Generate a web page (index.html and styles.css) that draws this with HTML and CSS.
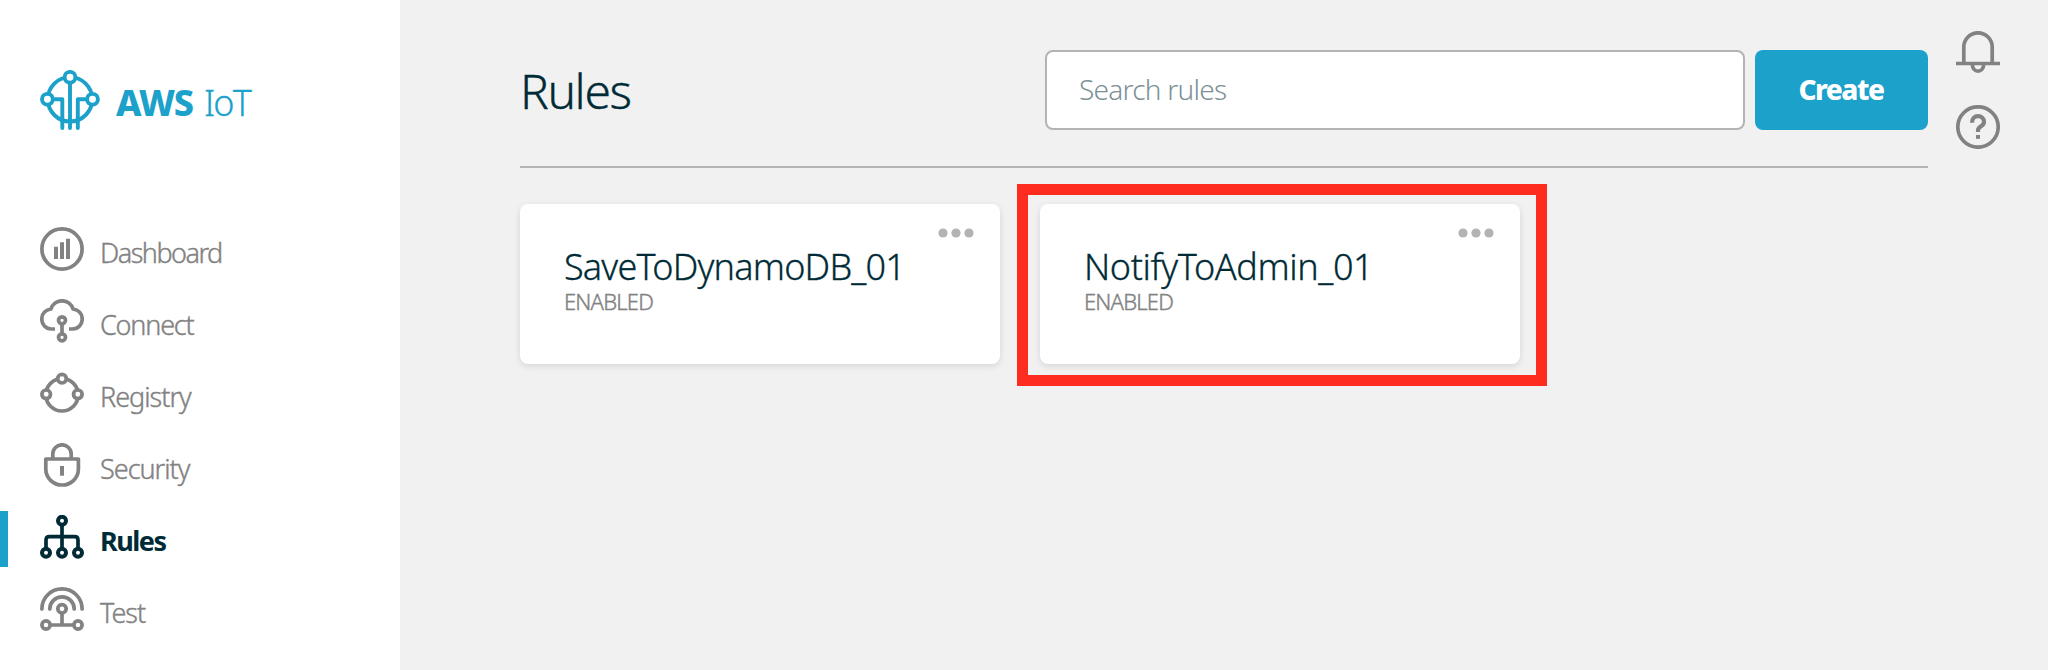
FILE: index.html
```html
<!DOCTYPE html>
<html lang="en">
<head>
<meta charset="utf-8">
<title>AWS IoT - Rules</title>
<link rel="stylesheet" href="styles.css">
</head>
<body>
<div class="app">
  <aside class="sidebar">
    <a class="logo">
      <svg class="logo-mark" viewBox="0 0 60 60">
        <circle cx="30" cy="29.3" r="22.2"/>
        <path d="M30 12V58M15 29.3H22.3V58M45 29.3H37.8V58"/>
        <circle class="node" cx="30" cy="7.3" r="5.4"/>
        <circle class="node" cx="7.4" cy="29.3" r="5.4"/>
        <circle class="node" cx="52.5" cy="29.3" r="5.4"/>
      </svg>
      <span class="logo-text"><b class="logo-aws">AWS</b><span class="logo-iot">IoT</span></span>
    </a>
    <nav class="nav">
      <a class="nav-item dashboard">
        <svg class="icon" viewBox="0 0 44 44"><circle cx="22" cy="22" r="20.1"/><path class="solid" d="M14 19.7h4V32h-4zM20 15.3h4V32h-4zM26 11.7h4V32h-4z"/></svg>
        <span class="label">Dashboard</span>
      </a>
      <a class="nav-item connect">
        <svg class="icon" viewBox="0 0 44 44"><path d="M15 30H11.5C5.5 30 1.8 25.5 1.8 20C1.8 14 6 10.8 11 10C12.5 5 17 1.8 22 1.8S31.5 5 33 10C38 10.8 42.2 14 42.2 20C42.2 25.5 38.5 30 32.5 30H29M22 25V35"/><circle class="node" cx="22" cy="21.3" r="3.5"/><circle class="node" cx="22" cy="38.3" r="3.5"/></svg>
        <span class="label">Connect</span>
      </a>
      <a class="nav-item registry">
        <svg class="icon" viewBox="0 0 44 44"><circle cx="22" cy="23.8" r="16.2"/><circle class="node" cx="22" cy="7.7" r="4.3"/><circle class="node" cx="6.2" cy="23.3" r="4.3"/><circle class="node" cx="37.8" cy="23.3" r="4.3"/></svg>
        <span class="label">Registry</span>
      </a>
      <a class="nav-item security">
        <svg class="icon" viewBox="0 0 44 44"><path d="M12.8 16V11a9.2 9.2 0 0 1 18.4 0V16M5.8 16H38.4V26a16.3 16 0 0 1-32.6 0Z"/><path class="solid" d="M20 23h4v9.7h-4z"/></svg>
        <span class="label">Security</span>
      </a>
      <a class="nav-item rules active">
        <svg class="icon" viewBox="0 0 44 44"><path d="M22 8V36M6 36V25Q6 21.7 9.5 21.7H34.5Q38 21.7 38 25V36"/><circle class="node thick" cx="22" cy="5.8" r="4"/><circle class="node thick" cx="6" cy="37.8" r="4"/><circle class="node thick" cx="22" cy="37.8" r="4"/><circle class="node thick" cx="38" cy="37.8" r="4"/></svg>
        <span class="label">Rules</span>
      </a>
      <a class="nav-item test">
        <svg class="icon" viewBox="0 0 44 44"><path class="round" d="M1.9 22a20.1 20.1 0 0 1 40.2 0M9.8 22a12.2 12.2 0 0 1 24.4 0"/><path d="M22 24V38M6 38H38"/><circle class="node" cx="22" cy="21.8" r="4.2"/><circle class="node" cx="6" cy="38" r="4.1"/><circle class="node" cx="38" cy="38" r="4.1"/></svg>
        <span class="label">Test</span>
      </a>
    </nav>
  </aside>
  <main class="main">
    <header class="header">
      <h1 class="title">Rules</h1>
      <div class="tools">
        <input class="search" type="text" placeholder="Search rules">
        <button class="create">Create</button>
      </div>
    </header>
    <section class="cards">
      <article class="card">
        <svg class="dots" viewBox="0 0 36 10"><circle cx="5" cy="5" r="4.6"/><circle cx="18" cy="5" r="4.6"/><circle cx="31" cy="5" r="4.6"/></svg>
        <h2 class="card-title save">SaveToDynamoDB_01</h2>
        <p class="status">ENABLED</p>
      </article>
      <article class="card highlighted">
        <svg class="dots" viewBox="0 0 36 10"><circle cx="5" cy="5" r="4.6"/><circle cx="18" cy="5" r="4.6"/><circle cx="31" cy="5" r="4.6"/></svg>
        <h2 class="card-title notify">NotifyToAdmin_01</h2>
        <p class="status">ENABLED</p>
      </article>
    </section>
  </main>
  <div class="rail">
    <svg class="icon" viewBox="0 0 44 44"><path d="M7.8 32V16a14.2 14.2 0 0 1 28.4 0V32M0 32.5H44M16.4 34a5.6 6.2 0 0 0 11.2 0"/></svg>
    <svg class="icon" viewBox="0 0 44 44"><circle cx="22" cy="22" r="20.2"/><path class="question" d="M16 17.7C16 13.5 18.5 11.2 22 11.2S28 13.5 28 17C28 21.5 22 21 22 25.5V27"/><path class="solid" d="M20 30h4v3.8h-4z"/></svg>
  </div>
</div>
</body>
</html>
```
FILE: styles.css
```css
* { box-sizing: border-box; }
body {
  margin: 0;
  font-family: "Noto Sans", "Open Sans", sans-serif;
  font-weight: 300;
  color: #002b36;
  background: #f1f1f1;
}
.app { display: flex; width: 2048px; height: 670px; overflow: hidden; }
.sidebar { width: 400px; flex: none; background: #fff; color: #828282; }

.logo { display: flex; gap: 16px; height: 223px; padding: 70px 0 0 40px; color: #1ba1ca; }
.logo-mark { width: 60px; height: 60px; flex: none; fill: none; stroke: currentColor; stroke-width: 3.9; stroke-linecap: round; stroke-linejoin: round; }
.logo-text { display: flex; gap: 11px; height: 66px; line-height: 66px; font-size: 36px; }
.logo-aws { font-weight: 800; letter-spacing: -1.1px; }
.logo-iot { letter-spacing: -1.9px; -webkit-text-stroke: 0.3px currentColor; }

.nav { display: flex; flex-direction: column; gap: 16px; }
.nav-item { display: flex; align-items: center; gap: 16px; height: 56px; padding-left: 40px; font-size: 27px; line-height: 52px; letter-spacing: -1px; -webkit-text-stroke: 0.4px currentColor; }
.nav-item.dashboard { letter-spacing: -1.5px; }
.nav-item.connect { letter-spacing: -1.2px; }
.nav-item.active { padding-left: 32px; border-left: 8px solid #1ba1ca; color: #002b36; font-weight: 700; letter-spacing: -1.5px; -webkit-text-stroke: 0; }
.nav-item .icon { margin-bottom: 4px; }
.label { padding-top: 3px; }

.icon { width: 44px; height: 44px; flex: none; fill: none; stroke: currentColor; stroke-width: 3.7; stroke-linejoin: round; }
.icon .solid { fill: currentColor; stroke: none; }
.icon .round { stroke-linecap: round; }
.icon .question { stroke-width: 4.2; }
.node { fill: #fff; }
.icon .thick { stroke-width: 4; }

.main { width: 1408px; flex: none; margin-left: 120px; }
.header { display: flex; justify-content: space-between; height: 168px; padding-top: 50px; border-bottom: 2px solid #b3b3b3; }
.title { margin: 0; font-size: 48px; line-height: 82px; font-weight: 300; letter-spacing: -1.4px; -webkit-text-stroke: 0.3px currentColor; }
.tools { display: flex; gap: 10px; height: 80px; }
.search { width: 700px; padding: 0 32px 2px; border: 2px solid #b3b3b3; border-radius: 8px; background: #fff; font: inherit; font-size: 28px; letter-spacing: -0.75px; }
.search::placeholder { color: #7c9196; opacity: 1; }
.create { width: 173px; padding: 0 1px 2px 0; border: 0; border-radius: 8px; background: #1ba1ca; color: #fff; font: inherit; font-size: 28px; font-weight: 800; letter-spacing: -1.5px; }

.cards { display: flex; gap: 40px; margin-top: 36px; }
.card { position: relative; width: 480px; height: 160px; padding: 41px 44px 0; border-radius: 8px; background: #fff; box-shadow: 0 2px 6px rgba(0, 0, 0, 0.12); }
.card-title { margin: 0; font-size: 36px; line-height: 44px; font-weight: 300; -webkit-text-stroke: 0.3px currentColor; }
.card-title.save { letter-spacing: -0.8px; }
.card-title.notify { letter-spacing: -0.4px; }
.status { margin: 0; color: #828282; font-size: 22px; line-height: 25px; letter-spacing: -0.8px; -webkit-text-stroke: 0.4px currentColor; }
.dots { position: absolute; top: 24px; right: 26px; width: 36px; height: 10px; fill: #b3b3b3; }
.highlighted::after { content: ""; position: absolute; inset: -20px -27px -22px -23px; border: 11px solid #fe2b1f; }

.rail { display: flex; flex-direction: column; gap: 30px; margin-left: 28px; padding-top: 31px; color: #828282; }
```
